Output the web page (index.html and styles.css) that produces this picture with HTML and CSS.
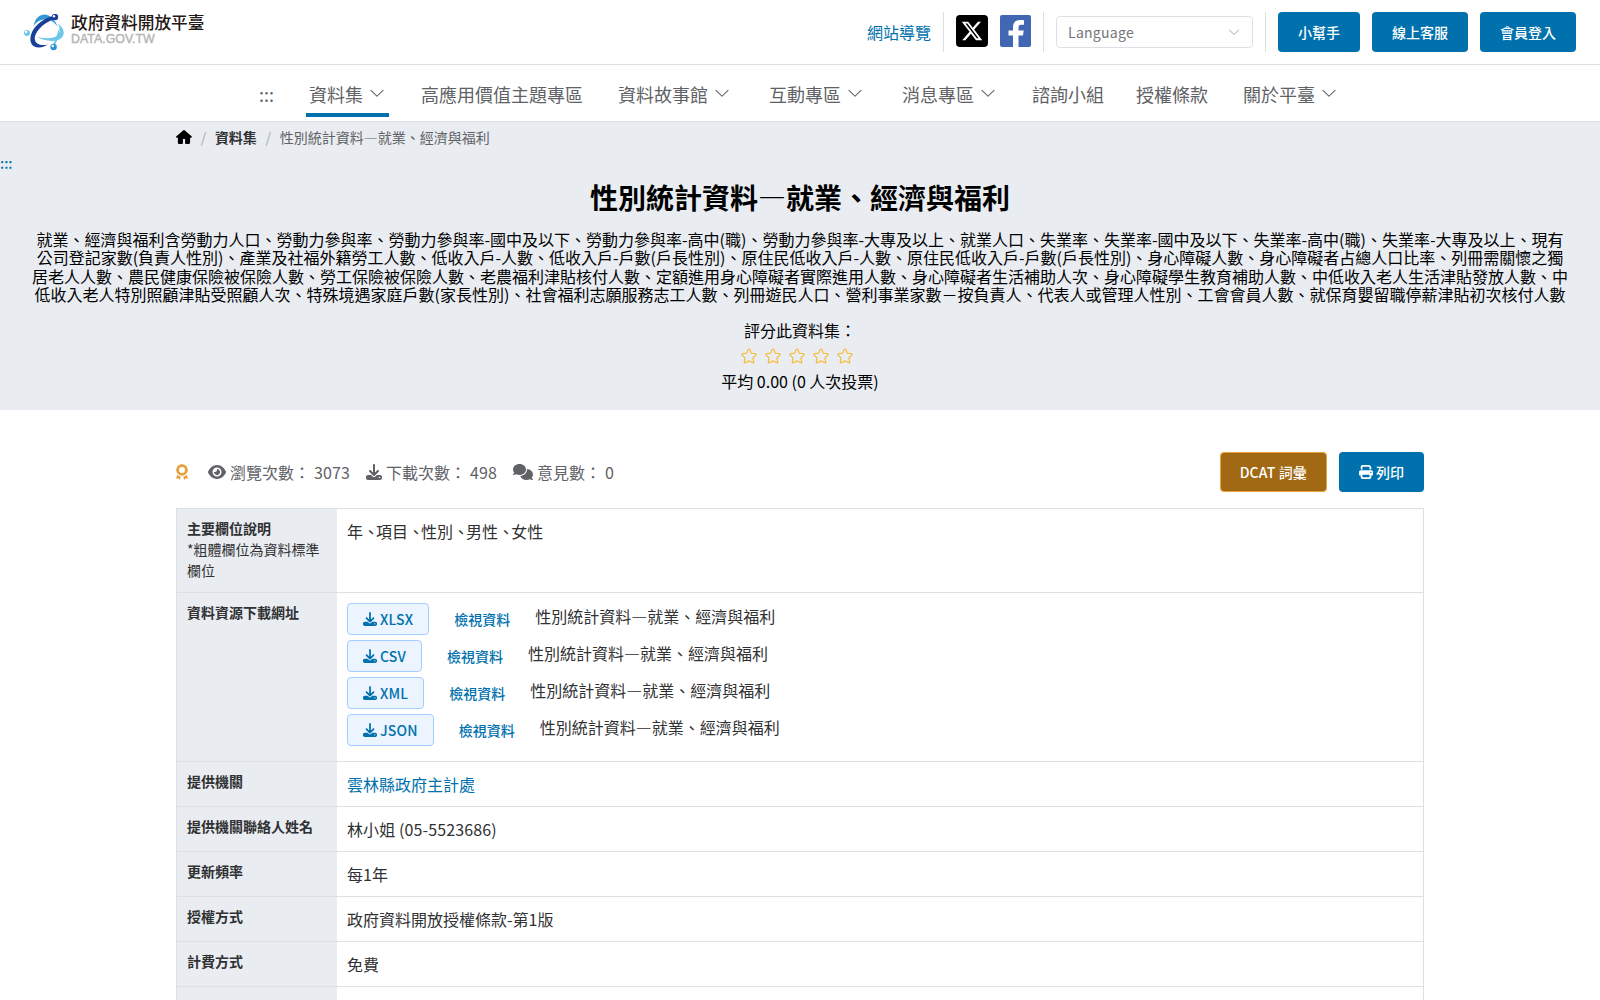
FILE: index.html
```html
<!DOCTYPE html>
<html lang="zh-Hant">
<head>
<meta charset="utf-8">
<title>性別統計資料—就業、經濟與福利</title>
<link rel="stylesheet" href="styles.css">
</head>
<body>
<svg class="sprite" aria-hidden="true">
  <symbol id="chevron" viewBox="0 0 1024 1024"><path d="M831.872 340.864 512 652.672 192.128 340.864a30.592 30.592 0 0 0-42.752 0 29.12 29.12 0 0 0 0 41.6L489.664 714.24a32 32 0 0 0 44.672 0l340.288-331.712a29.12 29.12 0 0 0 0-41.728 30.592 30.592 0 0 0-42.752 0z"/></symbol>
  <symbol id="download" viewBox="0 0 512 512"><path d="M288 32c0-17.7-14.3-32-32-32s-32 14.3-32 32V274.7l-73.4-73.4c-12.5-12.5-32.8-12.5-45.3 0s-12.5 32.8 0 45.3l128 128c12.5 12.5 32.8 12.5 45.3 0l128-128c12.5-12.5 12.5-32.8 0-45.3s-32.8-12.5-45.3 0L288 274.7V32zM64 352c-35.3 0-64 28.7-64 64v32c0 35.3 28.7 64 64 64H448c35.3 0 64-28.7 64-64V416c0-35.3-28.7-64-64-64H346.5l-45.3 45.3c-25 25-65.5 25-90.5 0L165.5 352H64zm368 56a24 24 0 1 1 0 48 24 24 0 1 1 0-48z"/></symbol>
  <symbol id="star" viewBox="0 0 1024 1024"><path d="m512 747.84 228.16 119.936a6.4 6.4 0 0 0 9.28-6.72l-43.52-254.08 184.512-179.904a6.4 6.4 0 0 0-3.52-10.88l-255.104-37.12L517.76 147.904a6.4 6.4 0 0 0-11.52 0L392.192 379.072l-255.104 37.12a6.4 6.4 0 0 0-3.52 10.88L318.08 606.976l-43.584 254.08a6.4 6.4 0 0 0 9.28 6.72L512 747.84zM313.6 924.48a70.4 70.4 0 0 1-102.144-74.24l37.888-220.928L88.96 472.96A70.4 70.4 0 0 1 128 352.896l221.76-32.256 99.2-200.96a70.4 70.4 0 0 1 126.208 0l99.2 200.96 221.824 32.256a70.4 70.4 0 0 1 39.04 120.064L774.72 629.376l37.888 220.928a70.4 70.4 0 0 1-102.144 74.24L512 820.096l-198.4 104.32z"/></symbol>
</svg>

<header class="topbar">
  <a class="logo">
    <svg class="logo-mark" viewBox="0 0 40 37" width="40" height="37">
      <path d="M9.500 12C11 4 16 .5 20.500 .5C26 .5 31 6 34 13C30 7.500 25.500 5.200 20.500 5.500C16 5.800 12.500 8 9.500 12Z" fill="#3597d6"/>
      <path d="M31 1.500C21 3.500 12 10 8 18C4.500 26 6.500 33.500 15 33.500C18.500 33.500 21.500 32 24 30.500C17 32 12 30.500 11 26C9.500 19 19 8.500 31 5Z" fill="#1a3f98"/>
      <path d="M33.500 9.500C40 13.500 41.500 20 37.500 24C32 29 20 27 12 22.500C20 24.800 30 25 33.800 21C37 17.500 36.500 13.500 33.500 9.500Z" fill="#6cc8e8"/>
      <path d="M35.500 13C36 20 34 27 29.500 32.500L28.500 31.500C32 25 34 18 35.500 13Z" fill="#6cc8e8"/>
      <circle cx="31" cy="3" r="3.200" fill="#1a3f98"/><circle cx="30" cy="2.200" r="1.200" fill="#fff"/>
      <circle cx="3" cy="19" r="3" fill="#6cc8e8"/><circle cx="2.200" cy="18" r="1.200" fill="#fff"/>
      <circle cx="29.600" cy="33" r="3.200" fill="#2b93d3"/><circle cx="28.800" cy="32" r="1.200" fill="#fff"/>
    </svg>
    <span class="logo-text"><b>政府資料開放平臺</b><small>DATA.GOV.TW</small></span>
  </a>
  <div class="tools">
    <a class="sitemap">網站導覽</a>
    <div class="social">
      <svg width="32" height="32" viewBox="0 0 32 32"><rect width="32" height="32" rx="4"/><path transform="translate(4.600 4.600) scale(.0445)" fill="#fff" d="M389.2 48h70.6L305.6 224.2 487 464H345L233.7 318.6 106.5 464H35.8L200.700 275.5 26.8 48H172.4L272.900 180.9 389.2 48zM364.4 421.8h39.100L151.1 88h-42L364.4 421.8z"/></svg>
      <svg width="31" height="32" viewBox="0 0 31 32"><rect width="31" height="32" rx="2" fill="#4267b2"/><path fill="#fff" d="M13 32V20.500H8.500V15.500H13V12C13 7.500 15.500 5 20 5C21.800 5 23.300 5.200 24 5.300V9.800H21.300C19 9.800 18.500 11 18.500 12.500V15.500H23.700L23 20.500H18.500V32Z"/></svg>
    </div>
    <div class="language">Language<svg width="14" height="14"><use href="#chevron"/></svg></div>
    <div class="actions"><a class="btn">小幫手</a><a class="btn">線上客服</a><a class="btn">會員登入</a></div>
  </div>
</header>

<nav class="mainnav">
  <a class="skip">:::</a>
  <a class="menu active">資料集<svg><use href="#chevron"/></svg></a>
  <a>高應用價值主題專區</a>
  <a class="menu">資料故事館<svg><use href="#chevron"/></svg></a>
  <a class="menu">互動專區<svg><use href="#chevron"/></svg></a>
  <a class="menu">消息專區<svg><use href="#chevron"/></svg></a>
  <a>諮詢小組</a>
  <a>授權條款</a>
  <a class="menu">關於平臺<svg><use href="#chevron"/></svg></a>
</nav>

<section class="hero">
  <div class="breadcrumb">
    <svg width="16" height="14" viewBox="0 0 576 512"><path d="M575.800 255.500c0 18-15 32.100-32 32.100h-32l.7 160.200c0 35-22 64.200-50 64.200H360c-22 0-32-14-32-32V350c0-12-8-18-20-18h-40c-12 0-20 6-20 18v130c0 18-14 32-32 32H114c-28 0-50-22-50-50V287.600H32c-18 0-32-14-32-32.100 0-9 3-17 10-24L266.400 8c7-7 15-8 22-8s15 2 21 7L564.800 231.500c8 7 12 15 11 24z"/></svg>
    <i>/</i><b>資料集</b><i>/</i><span>性別統計資料—就業、經濟與福利</span>
  </div>
  <a class="anchor">:::</a>
  <h1>性別統計資料—就業、經濟與福利</h1>
  <p class="summary">就業、經濟與福利含勞動力人口、勞動力參與率、勞動力參與率-國中及以下、勞動力參與率-高中(職)、勞動力參與率-大專及以上、就業人口、失業率、失業率-國中及以下、失業率-高中(職)、失業率-大專及以上、現有<br>公司登記家數(負責人性別)、產業及社福外籍勞工人數、低收入戶-人數、低收入戶-戶數(戶長性別)、原住民低收入戶-人數、原住民低收入戶-戶數(戶長性別)、身心障礙人數、身心障礙者占總人口比率、列冊需關懷之獨<br>居老人人數、農民健康保險被保險人數、勞工保險被保險人數、老農福利津貼核付人數、定額進用身心障礙者實際進用人數、身心障礙者生活補助人次、身心障礙學生教育補助人數、中低收入老人生活津貼發放人數、中<br>低收入老人特別照顧津貼受照顧人次、特殊境遇家庭戶數(家長性別)、社會福利志願服務志工人數、列冊遊民人口、營利事業家數－按負責人、代表人或管理人性別、工會會員人數、就保育嬰留職停薪津貼初次核付人數</p>
  <div class="rating">
    <div>評分此資料集：</div>
    <div class="stars"><svg><use href="#star"/></svg><svg><use href="#star"/></svg><svg><use href="#star"/></svg><svg><use href="#star"/></svg><svg><use href="#star"/></svg></div>
    <div>平均 0.00 (0 人次投票)</div>
  </div>
</section>

<main class="content">
  <div class="meta">
    <div class="stats">
      <svg class="award" width="12" height="16" viewBox="0 0 12 16"><path fill="#e6a23c" fill-rule="evenodd" d="M4.500 .6Q6-.5 7.500 .6L9.500 1.200L10.800 2.800Q11.500 4 11.600 5Q12.300 6 11.600 7.200Q11.400 8.800 10.400 9.600Q9.200 11 7.500 11.300Q6 12.300 4.500 11.300Q2.800 11 1.600 9.600Q.6 8.800 .4 7.200Q-.3 6 .4 5Q.5 4 1.200 2.800L2.500 1.200ZM6 3A3 3 0 1 0 6 9A3 3 0 1 0 6 3Z"/><path fill="#e6a23c" d="M1.300 10.800Q2.600 12.300 4.800 12.600L3.700 16L2.500 14.500L0 14.500ZM10.700 10.800Q9.400 12.300 7.200 12.600L8.300 16L9.500 14.500L12 14.500Z"/></svg>
      <span><svg width="18" height="16" viewBox="0 0 576 512"><path d="M288 32c-80.8 0-145.5 36.8-192.6 80.6C48.6 156 17.3 208 2.5 243.7c-3.3 7.9-3.3 16.7 0 24.6C17.3 304 48.6 356 95.4 399.4C142.5 443.2 207.2 480 288 480s145.5-36.8 192.6-80.6c46.8-43.5 78.1-95.4 93-131.1c3.3-7.9 3.3-16.7 0-24.6c-14.9-35.7-46.2-87.7-93-131.1C433.5 68.8 368.8 32 288 32zM144 256a144 144 0 1 1 288 0 144 144 0 1 1 -288 0zm144-64c0 35.3-28.7 64-64 64c-7.1 0-13.9-1.2-20.3-3.3c-5.5-1.8-11.9 1.6-11.7 7.4c.3 6.9 1.3 13.8 3.2 20.7c13.7 51.2 66.4 81.6 117.6 67.9s81.6-66.4 67.9-117.6c-11.1-41.5-47.8-69.4-88.6-71.1c-5.8-.2-9.2 6.1-7.4 11.7c2.1 6.4 3.3 13.2 3.3 20.3z"/></svg>瀏覽次數：<em>3073</em></span>
      <span><svg width="16" height="16"><use href="#download"/></svg>下載次數：<em>498</em></span>
      <span><svg width="20" height="16" viewBox="0 0 640 512"><path d="M208 352c114.9 0 208-78.8 208-176S322.9 0 208 0S0 78.8 0 176c0 38.6 14.7 74.3 39.6 103.4c-3.5 9.4-8.7 17.7-14.2 24.7c-4.8 6.2-9.7 11-13.3 14.3c-1.8 1.6-3.3 2.9-4.3 3.7c-.5 .4-.9 .7-1.1 .8l-.2 .2C1 327.2-1.4 334.4 .8 340.9S9.1 352 16 352c21.8 0 43.8-5.6 62.1-12.5c9.2-3.5 17.8-7.4 25.2-11.4C134.1 343.3 169.8 352 208 352zM448 176c0 112.3-99.1 196.9-216.5 207C255.8 457.4 336.4 512 432 512c38.2 0 73.9-8.7 104.7-23.9c7.5 4 16 7.9 25.2 11.4c18.3 6.9 40.3 12.5 62.1 12.5c6.9 0 13.1-4.5 15.2-11.1c2.1-6.6-.2-13.8-5.8-17.9l-.2-.2c-.2-.2-.6-.4-1.1-.8c-1-.8-2.5-2-4.3-3.7c-3.6-3.3-8.5-8.1-13.3-14.3c-5.5-7-10.7-15.4-14.2-24.7c24.9-29 39.6-64.7 39.6-103.4c0-92.8-84.9-168.9-192.6-175.5c.4 5.1 .6 10.3 .6 15.5z"/></svg>意見數：<em>0</em></span>
    </div>
    <div class="actions">
      <a class="btn brown">DCAT 詞彙</a>
      <a class="btn"><svg width="14" height="14" viewBox="0 0 512 512"><path d="M128 0C92.7 0 64 28.7 64 64v96h64V64H354.7L384 93.3V160h64V93.3c0-17-6.7-33.3-18.7-45.3L400 18.7C388 6.7 371.7 0 354.7 0H128zM384 352v32 64H128V384 368 352H384zm64 32h32c17.7 0 32-14.3 32-32V256c0-35.3-28.7-64-64-64H64c-35.3 0-64 28.7-64 64v96c0 17.7 14.3 32 32 32H64v64c0 35.3 28.7 64 64 64H384c35.3 0 64-28.7 64-64V384zM432 248a24 24 0 1 1 0 48 24 24 0 1 1 0-48z"/></svg>列印</a>
    </div>
  </div>
  <div class="table">
    <div class="row"><div class="label"><b>主要欄位說明</b><br>*粗體欄位為資料標準欄位</div><div class="value fields"><span>年</span><span>項目</span><span>性別</span><span>男性</span><span>女性</span></div></div>
    <div class="row"><div class="label"><b>資料資源下載網址</b></div><div class="value">
      <div class="resource"><a class="file"><svg><use href="#download"/></svg>XLSX</a><a class="view">檢視資料</a><span>性別統計資料—就業、經濟與福利</span></div>
      <div class="resource"><a class="file"><svg><use href="#download"/></svg>CSV</a><a class="view">檢視資料</a><span>性別統計資料—就業、經濟與福利</span></div>
      <div class="resource"><a class="file"><svg><use href="#download"/></svg>XML</a><a class="view">檢視資料</a><span>性別統計資料—就業、經濟與福利</span></div>
      <div class="resource"><a class="file"><svg><use href="#download"/></svg>JSON</a><a class="view">檢視資料</a><span>性別統計資料—就業、經濟與福利</span></div>
    </div></div>
    <div class="row"><div class="label"><b>提供機關</b></div><div class="value"><a>雲林縣政府主計處</a></div></div>
    <div class="row"><div class="label"><b>提供機關聯絡人姓名</b></div><div class="value phone">林小姐 (05-5523686)</div></div>
    <div class="row"><div class="label"><b>更新頻率</b></div><div class="value">每1年</div></div>
    <div class="row"><div class="label"><b>授權方式</b></div><div class="value">政府資料開放授權條款-第1版</div></div>
    <div class="row"><div class="label"><b>計費方式</b></div><div class="value">免費</div></div>
    <div class="row"><div class="label"></div><div class="value"></div></div>
  </div>
</main>
</body>
</html>
```
FILE: styles.css
```css
* { box-sizing: border-box; }
html { height: 100%; overflow: hidden; }
body {
  margin: 0;
  height: 100%;
  overflow: hidden;
  font: 16px/1.5 "Noto Sans CJK TC", sans-serif;
  color: #000;
  background: #fff;
}
svg { display: block; flex: none; fill: currentColor; }
.sprite { display: none; }
a { color: #0071ad; }

.topbar {
  display: flex;
  justify-content: space-between;
  align-items: center;
  height: 65px;
  padding: 0 24px;
  border-bottom: 1px solid #dcdfe6;
}
.logo { display: flex; align-items: center; gap: 7px; }
.logo-text { display: flex; flex-direction: column; padding-bottom: 6px; }
.logo-text b { font-size: 16.7px; font-weight: 500; line-height: 20px; color: #231815; }
.logo-text small { font: 12.4px/15px "Liberation Sans", sans-serif; color: #b5b5b6; -webkit-text-stroke: .4px #b5b5b6; }
.tools { display: flex; height: 40px; }
.tools > * { display: flex; align-items: center; }
.sitemap { padding-right: 12px; }
.social { gap: 12px; padding: 0 12px 2px; border: solid #dcdfe6; border-width: 0 1px; }
.language {
  align-self: center;
  justify-content: space-between;
  width: 197px;
  height: 32px;
  margin: 0 12px;
  padding: 0 11px;
  border: 1px solid #dcdfe6;
  border-radius: 4px;
  font-size: 14px;
  letter-spacing: .28px;
  color: #73767a;
}
.language svg { color: #a8abb2; }
.actions { display: flex; gap: 12px; }
.tools .actions { padding-left: 12px; border-left: 1px solid #dcdfe6; }
.btn {
  display: flex;
  align-items: center;
  gap: 3px;
  height: 40px;
  padding: 0 20px;
  border-radius: 4px;
  background: #0071ad;
  color: #fff;
  font-size: 14px;
  font-weight: 500;
  white-space: nowrap;
}
.btn.brown { background: #a16914; border: 1px solid #e6a23c; padding: 0 19px; letter-spacing: .15px; }

.mainnav {
  display: flex;
  justify-content: center;
  gap: 32px;
  height: 57px;
  border-bottom: 1px solid #dcdfe6;
  font-size: 18px;
  line-height: 27px;
}
.mainnav a { display: flex; align-items: center; height: 52px; padding-top: 10px; color: #606266; border-bottom: 4px solid transparent; }
.mainnav .menu { padding-left: 3px; padding-right: 3px; }
.mainnav .menu svg { width: 18px; height: 18px; margin: -3px 0 0 5px; }
.mainnav .active { border-color: #0071ad; }

.hero { height: 288px; background: #e9ecf1; text-align: center; }
.breadcrumb {
  display: flex;
  align-items: center;
  width: 1248px;
  height: 30px;
  margin: 0 auto;
  font-size: 14px;
  color: #606266;
}
.breadcrumb svg { color: #000; margin-top: -1px; }
.breadcrumb b { color: #303133; }
.breadcrumb i { margin: 0 8.700px; font-style: normal; color: #a8abb2; }
.anchor { display: block; height: 24px; line-height: 22px; text-align: left; font-size: 14px; font-weight: 500; }
h1 { margin: 0; font-size: 28px; line-height: 42px; }
.summary { margin: 12px 0 14px; line-height: 18.4px; white-space: nowrap; }
.rating { line-height: 25.600px; }
.stars { display: flex; justify-content: center; gap: 6px; height: 25.600px; padding-right: 6px; align-items: center; color: #f7ba2a; }
.stars svg { width: 18px; height: 18px; }

.content { width: 1248px; margin: 42px auto 0; }
.meta { display: flex; justify-content: space-between; height: 56px; }
.stats { display: flex; align-items: center; height: 40px; color: #606266; }
.stats .award { margin-right: 4px; }
.stats span { display: flex; align-items: center; gap: 4px; margin-left: 16px; }
.stats em { font-style: normal; letter-spacing: .12px; }

.table { border: 1px solid #dcdfe6; border-bottom: 0; color: #303133; }
.row { display: flex; min-height: 45px; border-bottom: 1px solid #dcdfe6; }
.label { width: 160px; padding: 9px 10px 11px; background: #e9ecf1; font-size: 14px; line-height: 21px; }
.value { flex: 1; padding: 10px; }
.phone { letter-spacing: .12px; }
.fields { display: flex; }
.fields span + span::before { content: "、"; margin-right: -3px; }
.resource { display: flex; height: 37px; }
.file {
  display: flex;
  align-items: center;
  gap: 3px;
  height: 32px;
  padding: 0 15px;
  border: 1px solid #a0cfff;
  border-radius: 4px;
  background: #ecf5ff;
  font-size: 14px;
  font-weight: 500;
  letter-spacing: .15px;
}
.file svg { width: 14px; height: 14px; }
.view { margin: 0 25px; font-size: 14px; font-weight: 500; line-height: 32px; }
.resource span { line-height: 26px; }
```
